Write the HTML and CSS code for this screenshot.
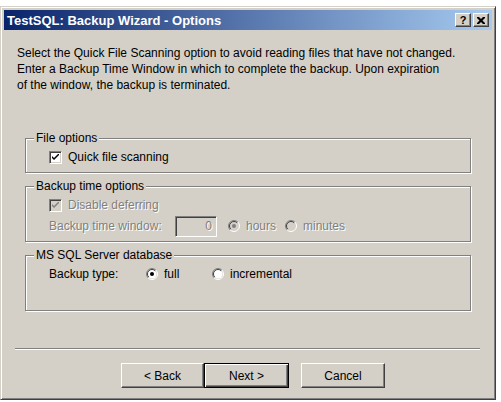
FILE: index.html
```html
<!DOCTYPE html>
<html lang="en">
<head>
    <meta charset="UTF-8">
    <meta name="viewport" content="width=device-width, initial-scale=1.0">
    <title>TestSQL: Backup Wizard - Options</title>
    <link rel="stylesheet" href="styles.css">
</head>
<body>
    <div class="window">
        <div class="titlebar">
            <span class="title">TestSQL: Backup Wizard - Options</span>
            <div class="caption-buttons">
                <span class="cap-btn help">?</span>
                <span class="cap-btn">
                    <svg width="8" height="7" viewBox="0 0 8 7"><path d="M0 0h2l2 2 2-2h2v1l-2.5 2.5 2.5 2.5v1h-2l-2-2-2 2h-2v-1l2.5-2.5-2.5-2.5z" fill="#000"/></svg>
                </span>
            </div>
        </div>

        <p class="intro">
            Select the Quick File Scanning option to avoid reading files that have not changed.<br>
            Enter a Backup Time Window in which to complete the backup. Upon expiration<br>
            of the window, the backup is terminated.
        </p>

        <fieldset class="group group-file">
            <legend>File options</legend>
            <div class="rows">
                <div class="row">
                    <span class="check">
                        <svg width="7" height="7" viewBox="0 0 7 7"><path d="M0 2l2 2 5-5v2l-5 5-2-2z" fill="#000"/></svg>
                    </span>
                    <span class="check-label">Quick file scanning</span>
                </div>
            </div>
        </fieldset>

        <fieldset class="group">
            <legend>Backup time options</legend>
            <div class="rows">
                <div class="row disabled">
                    <span class="check">
                        <svg width="7" height="7" viewBox="0 0 7 7"><path d="M0 2l2 2 5-5v2l-5 5-2-2z" fill="#808080"/></svg>
                    </span>
                    <span class="check-label">Disable deferring</span>
                </div>
                <div class="row row-window disabled">
                    <span class="field-label">Backup time window:</span>
                    <span class="textbox">0</span>
                    <span class="radio-opt hours-opt">
                        <svg class="radio" width="12" height="12" viewBox="0 0 12 12">
                            <circle cx="6" cy="6" r="4.5" fill="#d4d0c8"/>
                            <path d="M2.1 9.9A5.5 5.5 0 0 1 9.9 2.1" fill="none" stroke="#808080"/>
                            <path d="M2.8 9.2A4.5 4.5 0 0 1 9.2 2.8" fill="none" stroke="#404040"/>
                            <path d="M9.9 2.1A5.5 5.5 0 0 1 2.1 9.9" fill="none" stroke="#fff"/>
                            <circle cx="6" cy="6" r="2" fill="#808080"/>
                        </svg>
                        hours
                    </span>
                    <span class="radio-opt">
                        <svg class="radio" width="12" height="12" viewBox="0 0 12 12">
                            <circle cx="6" cy="6" r="4.5" fill="#d4d0c8"/>
                            <path d="M2.1 9.9A5.5 5.5 0 0 1 9.9 2.1" fill="none" stroke="#808080"/>
                            <path d="M2.8 9.2A4.5 4.5 0 0 1 9.2 2.8" fill="none" stroke="#404040"/>
                            <path d="M9.9 2.1A5.5 5.5 0 0 1 2.1 9.9" fill="none" stroke="#fff"/>
                        </svg>
                        minutes
                    </span>
                </div>
            </div>
        </fieldset>

        <fieldset class="group group-tall">
            <legend>MS SQL Server database</legend>
            <div class="rows">
                <div class="row">
                    <span class="field-label type-label">Backup type:</span>
                    <span class="radio-opt full-opt">
                        <svg class="radio" width="12" height="12" viewBox="0 0 12 12">
                            <circle cx="6" cy="6" r="4.5" fill="#fff"/>
                            <path d="M2.1 9.9A5.5 5.5 0 0 1 9.9 2.1" fill="none" stroke="#808080"/>
                            <path d="M2.8 9.2A4.5 4.5 0 0 1 9.2 2.8" fill="none" stroke="#404040"/>
                            <path d="M9.9 2.1A5.5 5.5 0 0 1 2.1 9.9" fill="none" stroke="#fff"/>
                            <circle cx="6" cy="6" r="2" fill="#000"/>
                        </svg>
                        full
                    </span>
                    <span class="radio-opt">
                        <svg class="radio" width="12" height="12" viewBox="0 0 12 12">
                            <circle cx="6" cy="6" r="4.5" fill="#fff"/>
                            <path d="M2.1 9.9A5.5 5.5 0 0 1 9.9 2.1" fill="none" stroke="#808080"/>
                            <path d="M2.8 9.2A4.5 4.5 0 0 1 9.2 2.8" fill="none" stroke="#404040"/>
                            <path d="M9.9 2.1A5.5 5.5 0 0 1 2.1 9.9" fill="none" stroke="#fff"/>
                        </svg>
                        incremental
                    </span>
                </div>
            </div>
        </fieldset>

        <div class="separator"></div>

        <div class="buttons">
            <button class="btn">&lt; Back</button>
            <button class="btn default">Next &gt;</button>
            <button class="btn cancel">Cancel</button>
        </div>
    </div>
</body>
</html>
```

FILE: styles.css
```css
*{
    margin: 0;
    padding: 0;
    box-sizing: border-box;
}
body{
    font-family: "Liberation Sans", Arial, sans-serif;
    font-size: 12px;
    color: #000;
    background-color: #fff;
}

/* dialog frame */
.window{
    margin-top: 6px;
    width: 496px;
    height: 394px;
    padding: 3px;
    background-color: #d4d0c8;
    border: 1px solid;
    border-color: #d4d0c8 #404040 #404040 #d4d0c8;
    box-shadow: inset 1px 1px #fff, inset -1px -1px #808080;
}
.titlebar{
    height: 20px;
    display: flex;
    align-items: center;
    justify-content: space-between;
    padding: 0 3px 0 3px;
    background: linear-gradient(to right, #0a246a, #a6caf0);
    color: #fff;
    font-size: 13px;
    font-weight: bold;
}
.caption-buttons{
    display: flex;
    gap: 2px;
}
.cap-btn{
    width: 16px;
    height: 14px;
    display: flex;
    align-items: center;
    justify-content: center;
    background-color: #d4d0c8;
    border: 1px solid;
    border-color: #fff #404040 #404040 #fff;
    box-shadow: inset -1px -1px #808080;
    color: #000;
    font-size: 11px;
    font-weight: bold;
}

.intro{
    margin: 15px 0 0 13px;
    line-height: 16px;
}

/* group boxes */
.group{
    margin: 38px 21px 0 21px;
    border: 1px solid #808080;
    box-shadow: inset 1px 1px #fff, 1px 1px #fff;
    min-width: 0;
}
.group + .group{
    margin-top: 6px;
}
.group legend{
    margin-left: 8px;
    padding: 0 2px;
    line-height: 14px;
    background-color: #d4d0c8;
}
.rows{
    padding: 3px 0 4px 23px;
}
.group-file .rows{
    padding-bottom: 6px;
}
.group-tall .rows{
    height: 48px;
}
.row{
    display: flex;
    align-items: center;
    height: 18px;
}
.row-window{
    height: 22px;
    margin-top: 1px;
}
.disabled{
    color: #808080;
    text-shadow: 1px 1px #fff;
}

.check{
    width: 13px;
    height: 13px;
    display: flex;
    align-items: center;
    justify-content: center;
    background-color: #fff;
    border: 1px solid;
    border-color: #808080 #fff #fff #808080;
    box-shadow: inset 1px 1px #404040, inset -1px -1px #d4d0c8;
}
.disabled .check{
    background-color: #d4d0c8;
}
.check-label{
    margin-left: 6px;
}

.field-label{
    width: 126px;
}
.type-label{
    width: 97px;
}
.textbox{
    width: 42px;
    height: 21px;
    line-height: 19px;
    padding-right: 4px;
    text-align: right;
    border: 1px solid;
    border-color: #808080 #fff #fff #808080;
    box-shadow: inset 1px 1px #404040, inset -1px -1px #d4d0c8;
}
.radio-opt{
    display: flex;
    align-items: center;
    gap: 6px;
}
.hours-opt{
    margin-left: 11px;
    width: 57px;
}
.full-opt{
    width: 66px;
}

.separator{
    margin: 37px 12px 0 11px;
    border-top: 1px solid #808080;
    border-bottom: 1px solid #fff;
}

/* wizard buttons */
.buttons{
    display: flex;
    margin: 13px 0 0 117px;
}
.btn{
    width: 83px;
    height: 25px;
    font-family: inherit;
    font-size: 12px;
    color: #000;
    background-color: #d4d0c8;
    border: 1px solid;
    border-color: #fff #404040 #404040 #fff;
    box-shadow: inset -1px -1px #808080;
}
.btn.default{
    width: 85px;
    border-color: #000;
    box-shadow: inset 1px 1px #fff, inset -1px -1px #404040, inset -2px -2px #808080;
}
.btn.cancel{
    width: 84px;
    margin-left: 12px;
}
```
